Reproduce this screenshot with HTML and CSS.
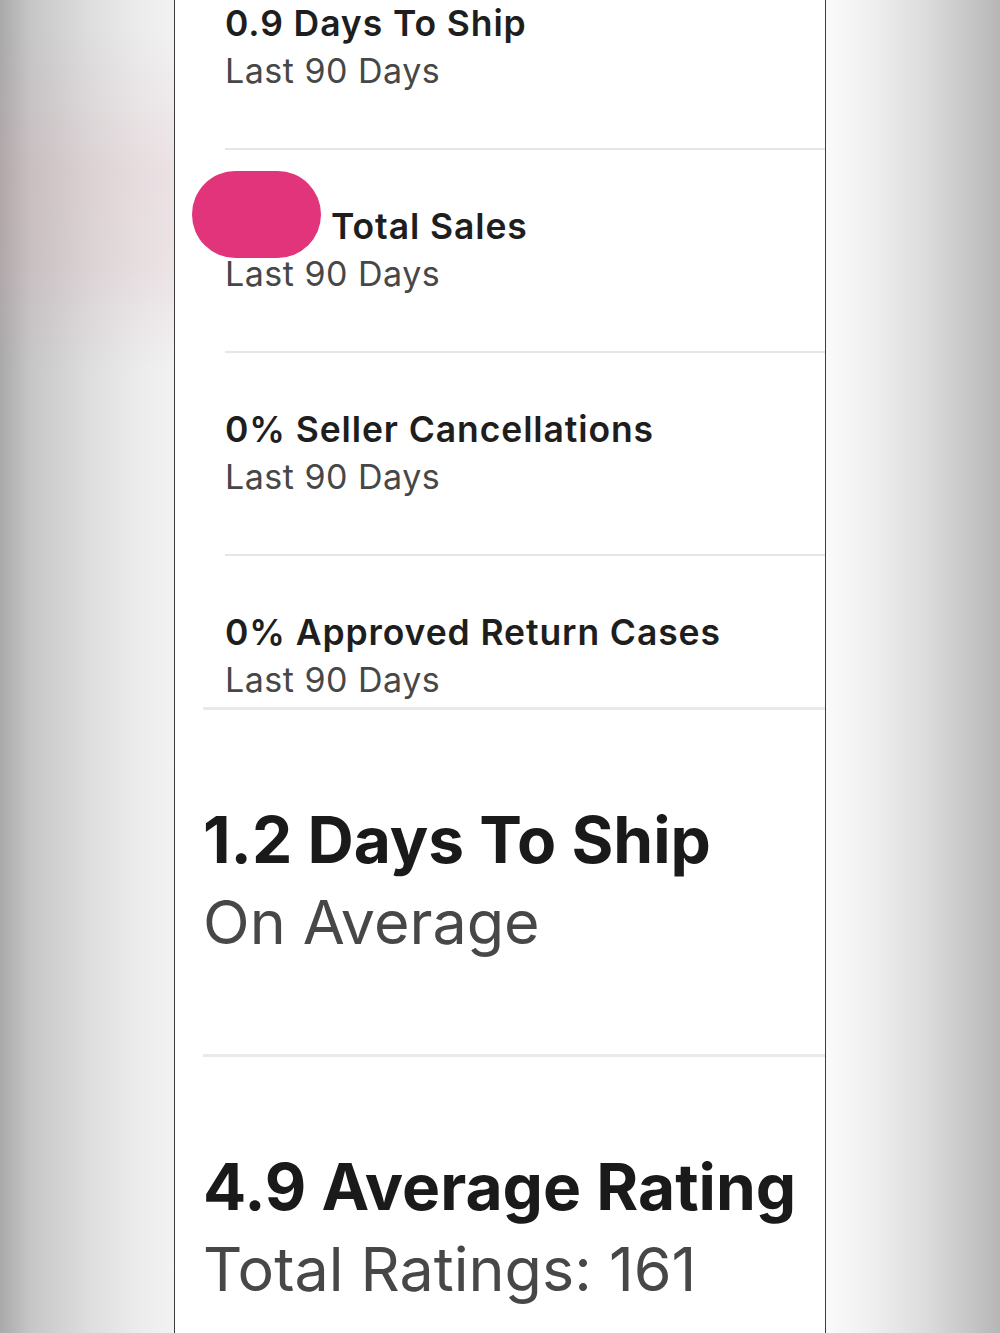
FILE: index.html
```html
<!DOCTYPE html>
<html lang="en">
<head>
<meta charset="utf-8">
<title>Shop stats</title>
<link rel="stylesheet" href="styles.css">
</head>
<body>
<div class="screen">
  <div class="gutter gutter-left"></div>
  <main class="panel">
    <ul class="stats-recent">
      <li class="stat">
        <div class="stat-title">0.9 Days To Ship</div>
        <div class="stat-sub">Last 90 Days</div>
      </li>
      <li class="stat">
        <div class="stat-title"><span class="redacted"></span>Total Sales</div>
        <div class="stat-sub">Last 90 Days</div>
      </li>
      <li class="stat">
        <div class="stat-title">0% Seller Cancellations</div>
        <div class="stat-sub">Last 90 Days</div>
      </li>
      <li class="stat">
        <div class="stat-title">0% Approved Return Cases</div>
        <div class="stat-sub">Last 90 Days</div>
      </li>
    </ul>
    <ul class="stats-summary">
      <li class="summary">
        <div class="summary-title">1.2 Days To Ship</div>
        <div class="summary-sub">On Average</div>
      </li>
      <li class="summary">
        <div class="summary-title">4.9 Average Rating</div>
        <div class="summary-sub">Total Ratings: 161</div>
      </li>
    </ul>
  </main>
  <div class="gutter gutter-right"></div>
</div>
</body>
</html>
```
FILE: styles.css
```css
html, body {
  margin: 0;
  padding: 0;
  background: #ffffff;
}

body {
  font-family: "Inter", "Liberation Sans", sans-serif;
}

.screen {
  display: flex;
  height: 1333px;
  overflow: hidden;
}

.gutter {
  flex: none;
}

.gutter-left {
  width: 174px;
  background:
    linear-gradient(to bottom,
      rgba(210, 160, 172, 0) 30px,
      rgba(210, 160, 172, 0.2) 170px,
      rgba(210, 160, 172, 0.18) 270px,
      rgba(210, 160, 172, 0) 370px),
    linear-gradient(to right, #a9a9a9 0, #c6c6c6 30px, #dedede 90px, #ececec 140px, #f2f2f2 174px);
}

.gutter-right {
  flex: 1;
  background: linear-gradient(to right, #fafafa 0, #f1f1f1 40px, #dcdcdc 100px, #c6c6c6 145px, #b6b6b6 174px);
}

.panel {
  flex: none;
  width: 650px;
  background: #ffffff;
  border-left: 1px solid #3c3c3c;
  border-right: 1px solid #3c3c3c;
}

ul {
  list-style: none;
  margin: 0;
  padding: 0;
}

/* recent (last 90 days) stats */
.stats-recent {
  margin-left: 50px;
}

.stat {
  padding: 53px 0 54px;
  border-bottom: 2px solid #e6e6e6;
}

.stat:first-child {
  padding-top: 0;
}

.stat:last-child {
  padding-bottom: 4px;
  border-bottom: none;
}

.stat-title {
  position: relative;
  font-size: 35.5px;
  line-height: 47px;
  font-weight: 600;
  letter-spacing: 0.9px;
  color: #1e1e1e;
  white-space: nowrap;
}

.stat-sub {
  font-size: 34px;
  line-height: 47px;
  font-weight: 400;
  letter-spacing: 0.5px;
  color: #474747;
  white-space: nowrap;
}

.redacted {
  display: inline-block;
  position: relative;
  width: 106px;
  height: 1px;
}

.redacted::before {
  content: "";
  position: absolute;
  left: -33px;
  top: -67px;
  width: 129px;
  height: 87px;
  border-radius: 44px;
  background: #e1347a;
}

/* summary stats */
.stats-summary {
  margin-left: 28px;
}

.summary {
  padding: 90px 0 90px;
  border-top: 3px solid #e9e9e9;
}

.summary-title {
  font-size: 64px;
  line-height: 80px;
  font-weight: 700;
  color: #1a1a1a;
  white-space: nowrap;
}

.summary-sub {
  font-size: 61px;
  line-height: 84px;
  font-weight: 400;
  color: #474747;
  white-space: nowrap;
}
```
